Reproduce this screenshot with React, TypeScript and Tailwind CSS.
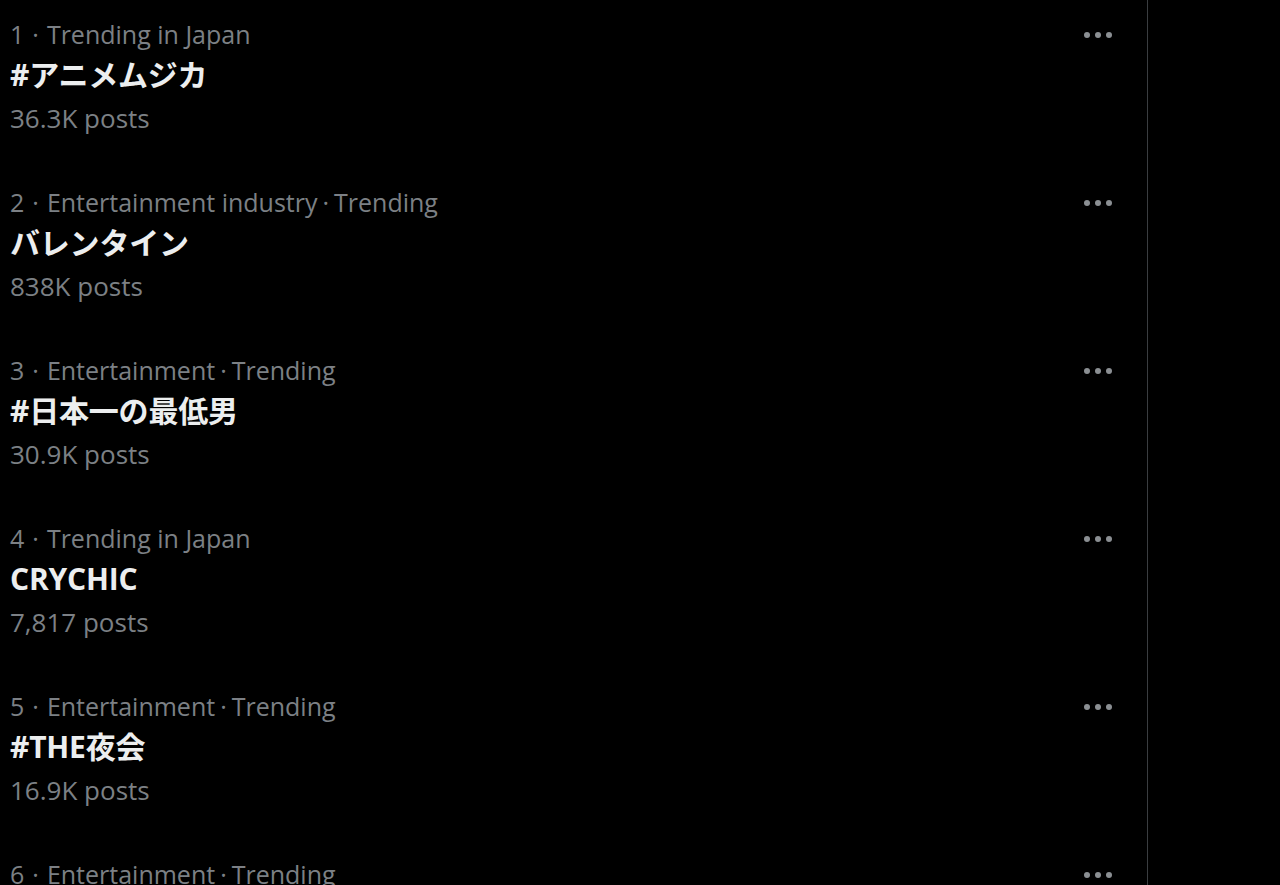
import { Fragment } from 'react';

type Trend = {
  rank: number;
  context: string;
  title: string;
  posts?: string;
};

const trends: Trend[] = [
  { rank: 1, context: 'Trending in Japan', title: '#アニメムジカ', posts: '36.3K posts' },
  { rank: 2, context: 'Entertainment industry · Trending', title: 'バレンタイン', posts: '838K posts' },
  { rank: 3, context: 'Entertainment · Trending', title: '#日本一の最低男', posts: '30.9K posts' },
  { rank: 4, context: 'Trending in Japan', title: 'CRYCHIC', posts: '7,817 posts' },
  { rank: 5, context: 'Entertainment · Trending', title: '#THE夜会', posts: '16.9K posts' },
  { rank: 6, context: 'Entertainment · Trending', title: '#有吉の壁', posts: '12.4K posts' },
];

function MoreDots() {
  return (
    <svg width="30" height="8" viewBox="0 0 30 8" className="text-[#8b8f93]">
      <circle cx="4" cy="4" r="3" fill="currentColor" />
      <circle cx="15" cy="4" r="3" fill="currentColor" />
      <circle cx="26" cy="4" r="3" fill="currentColor" />
    </svg>
  );
}

function TrendRow({ trend }: { trend: Trend }) {
  return (
    <div className="flex pl-[10px] pr-[34px] pt-[14px] pb-[28px]">
      <div className="flex-1 min-w-0">
        <div className="h-[40px] leading-[40px] text-[25px] text-[#7c8085] whitespace-nowrap">
          {trend.rank}
          <span className="mx-[8px]">·</span>
          {trend.context.split(' · ').map((part, i) => (
            <Fragment key={i}>
              {i > 0 && <span className="mx-[5px]">·</span>}
              {part}
            </Fragment>
          ))}
        </div>
        <div className="h-[42px] leading-[42px] text-[30px] font-bold text-[#eceeef] whitespace-nowrap tracking-[-0.2px]">
          {trend.title}
        </div>
        <div className="h-[44px] leading-[44px] text-[26px] text-[#7c8085] whitespace-nowrap">
          {trend.posts}
        </div>
      </div>
      <div className="h-[42px] flex items-center">
        <MoreDots />
      </div>
    </div>
  );
}

export default function App() {
  return (
    <div
      className="h-[885px] w-[1280px] overflow-hidden bg-black flex"
      style={{ fontFamily: '"Open Sans", "Noto Sans CJK JP", sans-serif' }}
    >
      <div className="w-[1148px] border-r border-[#3a3d40] h-full">
        {trends.map((t) => (
          <TrendRow key={t.rank} trend={t} />
        ))}
      </div>
      <div className="flex-1" />
    </div>
  );
}
